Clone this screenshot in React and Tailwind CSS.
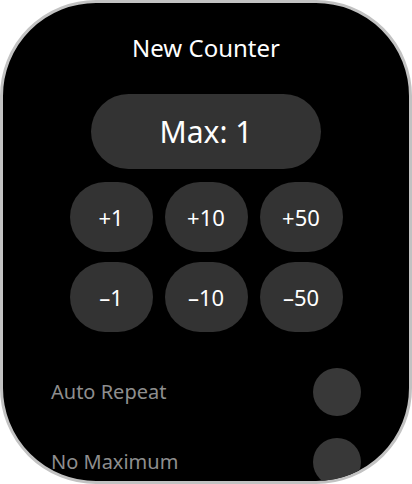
import React from 'react';

const steps = ['+1', '+10', '+50', '-1', '-10', '-50'];

const Toggle = ({ label }) => (
  <div className="flex items-center justify-between w-full">
    <span className="text-[20px] text-[#8e8e8e]">{label}</span>
    <div className="h-12 w-12 rounded-full bg-[#383838]" />
  </div>
);

export default function App() {
  return (
    <div className="w-[412px] h-[484px] bg-white" style={{ fontFamily: '"Noto Sans", sans-serif' }}>
      <div className="w-full h-full rounded-[96px] border-[3px] border-[#c2c2c2] bg-black overflow-hidden flex flex-col items-center">
        <h1 className="pt-[31px] text-[24px] leading-[28px] text-white">New Counter</h1>

        <button className="mt-[32px] w-[230px] h-[75px] shrink-0 rounded-full bg-[#333333] text-white text-[30px]">
          Max: 1
        </button>

        <div className="mt-[13px] grid grid-cols-3 gap-x-3 gap-y-[10px]">
          {steps.map((s) => (
            <button key={s} className="w-[83px] h-[70px] rounded-full bg-[#333333] text-white text-[22px]">
              {s.replace('-', '\u2013')}
            </button>
          ))}
        </div>

        <div className="mt-[36px] w-full px-[48px] flex flex-col gap-[22px]">
          <Toggle label="Auto Repeat" />
          <Toggle label="No Maximum" />
        </div>
      </div>
    </div>
  );
}
